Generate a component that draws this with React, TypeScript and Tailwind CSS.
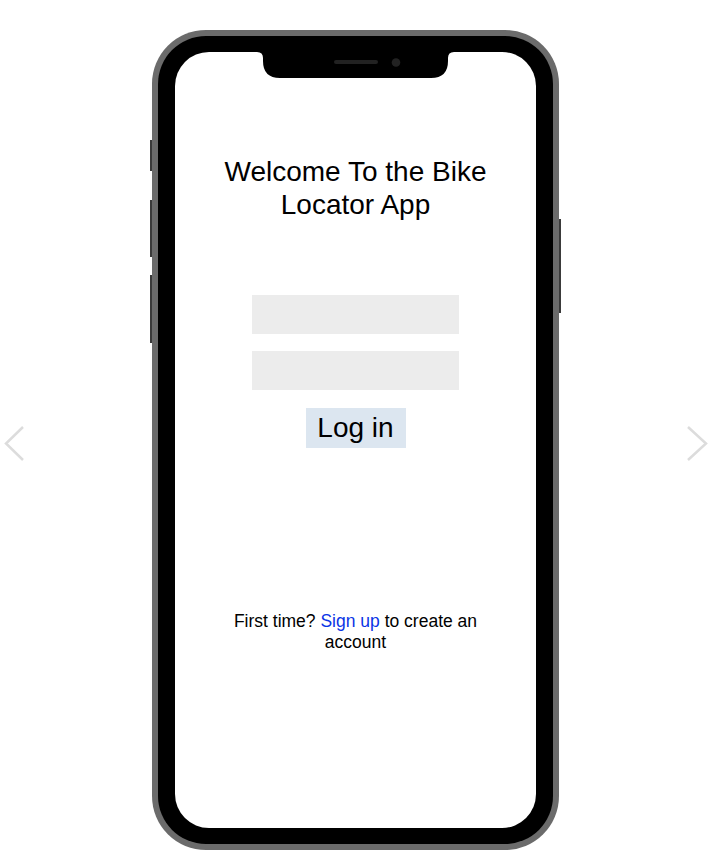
import React from "react";

export default function App() {
  const font = { fontFamily: '"Liberation Sans", Arial, Helvetica, sans-serif' };
  return (
    <div className="relative w-[720px] h-[864px] bg-white overflow-hidden" style={font}>
      {/* carousel chevrons */}
      <svg className="absolute left-0 top-[420px]" width="30" height="48" viewBox="0 0 30 48">
        <polyline points="23,7 6,23.5 23,40" fill="none" stroke="#dcdcdc" strokeWidth="2.5" />
      </svg>
      <svg className="absolute left-[682px] top-[420px]" width="30" height="48" viewBox="0 0 30 48">
        <polyline points="6,7 24,23.5 6,40" fill="none" stroke="#dcdcdc" strokeWidth="2.5" />
      </svg>

      <div className="pl-[152px] pt-[30px]">
        <div className="relative w-[407px] h-[820px] rounded-[54px] bg-[#6b6b6b] p-[6px]">
          {/* side buttons */}
          <div className="absolute left-[-2px] top-[110px] w-[2px] h-[31px] bg-[#3a3a3a]" />
          <div className="absolute left-[-2px] top-[170px] w-[2px] h-[57px] bg-[#3a3a3a]" />
          <div className="absolute left-[-2px] top-[245px] w-[2px] h-[68px] bg-[#3a3a3a]" />
          <div className="absolute right-[-2px] top-[189px] w-[2px] h-[94px] bg-[#3a3a3a]" />

          <div className="w-full h-full rounded-[48px] bg-black pt-[16px] pb-[16px] pl-[17px] pr-[17px]">
            <div className="relative w-full h-full rounded-[34px] bg-white flex flex-col items-center">
              {/* notch */}
              <svg className="absolute left-[82px] top-0" width="197" height="27" viewBox="0 0 197 27">
                <path d="M0 0 H197 Q191 0 191 6 V9 Q191 26 174 26 H23 Q6 26 6 9 V6 Q6 0 0 0 Z" fill="#000" />
                <rect x="77" y="8" width="44" height="4" rx="2" fill="#222" />
                <circle cx="139" cy="10.5" r="4.3" fill="#222" />
              </svg>

              <h1 className="mt-[103px] w-[300px] text-center text-[28px] leading-[33px] text-black font-normal">
                Welcome To the Bike Locator App
              </h1>

              <div className="mt-[74px] flex flex-col items-center gap-[17px]">
                <div className="w-[207px] h-[39px] bg-[#ececec]" />
                <div className="w-[207px] h-[39px] bg-[#ececec]" />
              </div>

              <div className="mt-[18px] w-[100px] h-[40px] bg-[#dce6f0] text-center text-[28px] leading-[40px] text-black">
                Log in
              </div>

              <p className="mt-[163px] w-[260px] text-center text-[17.5px] leading-[21px] text-black">
                First time? <span className="text-[#0a35e6]">Sign up</span> to create an account
              </p>
            </div>
          </div>
        </div>
      </div>
    </div>
  );
}
